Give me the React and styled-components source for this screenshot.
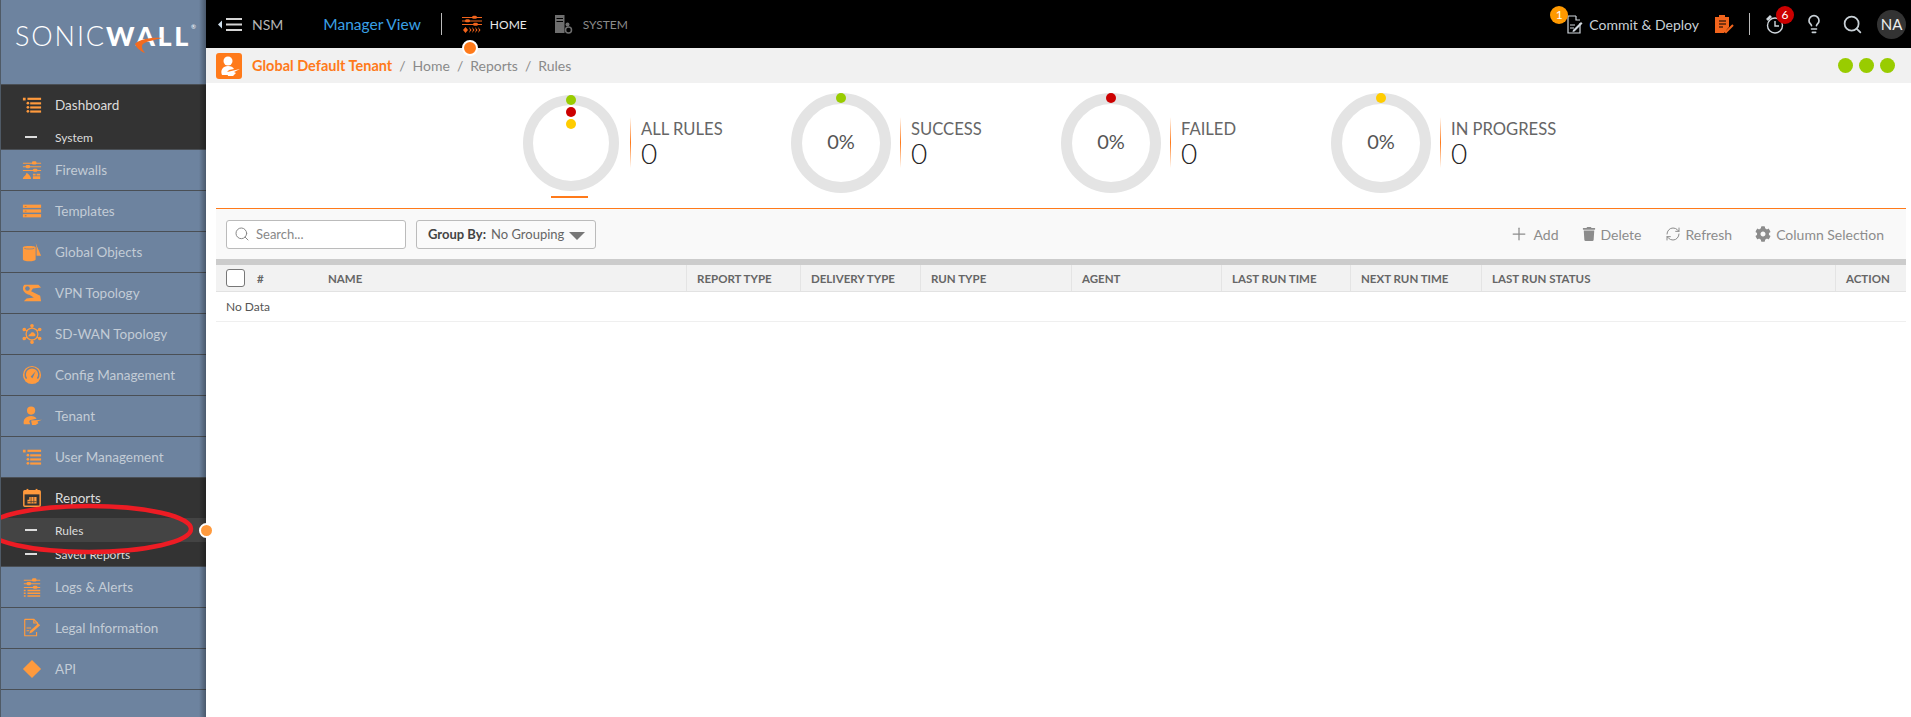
import styled, { createGlobalStyle } from "styled-components";
import { FaCog, FaTrash } from "react-icons/fa";
import { Search, Lightbulb, RefreshCw, Plus } from "lucide-react";

const ORANGE = "#ff9a3d";

const GlobalStyle = createGlobalStyle`
  html, body {
    margin: 0;
    padding: 0;
    background: #fff;
    font-family: "Lato", "Open Sans", sans-serif;
  }
  * {
    box-sizing: border-box;
  }
`;

const Page = styled.div`
  display: grid;
  grid-template-columns: 206px 1fr;
  height: 717px;
  overflow: hidden;
`;

/* sidebar */
const Sidebar = styled.aside`
  position: relative;
  background: #6d839f;
  border-left: 1px solid #4f5a66;
  &::after {
    content: "";
    position: absolute;
    top: 0;
    right: 0;
    bottom: 0;
    width: 7px;
    background: linear-gradient(to right, rgba(0, 0, 0, 0), rgba(0, 0, 0, 0.32));
    pointer-events: none;
  }
`;

const LogoBox = styled.div`
  position: relative;
  height: 85px;
  border-bottom: 1px solid #4a4f55;
  padding: 19px 0 0 14px;
  color: #fff;
  font-size: 27px;
  line-height: 34px;
  white-space: nowrap;
  span {
    font-weight: 300;
    letter-spacing: 1.9px;
  }
  b {
    font-weight: 900;
    letter-spacing: 2.7px;
  }
  sup {
    font-size: 6px;
    line-height: 6px;
    position: absolute;
    top: 24px;
    left: 190px;
  }
  svg {
    position: absolute;
    left: 134px;
    top: 37px;
  }
`;

const NavRow = styled.div`
  display: flex;
  align-items: center;
  height: ${(p) => (p.$header ? "40px" : "41px")};
  border-bottom: ${(p) => (p.$header ? "none" : "1px solid #4a4f55")};
  color: ${(p) => (p.$header ? "#dcdcdc" : "#c3ccd6")};
  font-size: 13.5px;
  svg {
    width: 20px;
    height: 20px;
    margin: 0 13px 0 21px;
    flex: none;
  }
`;

const NavGroup = styled.div`
  background: #333;
  border-bottom: 1px solid #4a4f55;
`;

const SubRow = styled.div`
  position: relative;
  display: flex;
  align-items: center;
  height: 24px;
  font-size: 12px;
  color: #dcdcdc;
  background: ${(p) => (p.$active ? "#444" : "transparent")};
  &::before {
    content: "";
    width: 12px;
    height: 2px;
    background: #ddd;
    margin: 0 18px 0 24px;
  }
`;

const ActiveDot = styled.span`
  position: absolute;
  right: -8px;
  top: 5px;
  width: 15px;
  height: 15px;
  border-radius: 50%;
  background: ${ORANGE};
  border: 2px solid #fff;
  z-index: 3;
`;

const Annotation = styled.svg`
  position: absolute;
  left: 0;
  top: 500px;
  width: 200px;
  height: 60px;
  z-index: 2;
`;

/* top bar */
const Main = styled.div`
  display: flex;
  flex-direction: column;
  min-width: 0;
`;

const TopBar = styled.header`
  position: relative;
  display: flex;
  align-items: center;
  height: 48px;
  background: #000;
  padding: 0 5px 0 12px;
  color: #bdbdbd;
`;

const NsmLabel = styled.span`
  font-size: 14px;
  margin-left: 10px;
  color: #b5b5b5;
`;

const ViewLabel = styled.span`
  font-size: 15.5px;
  margin-left: 40px;
  color: #3aa0e6;
`;

const VLine = styled.span`
  width: 1px;
  height: 22px;
  background: #bbb;
  margin-left: ${(p) => p.$left}px;
`;

const ModuleTab = styled.div`
  position: relative;
  display: flex;
  align-items: center;
  gap: 8px;
  margin-left: ${(p) => p.$left}px;
  font-size: 12px;
  color: ${(p) => (p.$active ? "#e8e8e8" : "#8a8a8a")};
`;

const TabDot = styled.span`
  position: absolute;
  left: 0;
  top: 25px;
  width: 16px;
  height: 16px;
  border-radius: 50%;
  background: #ff7a1a;
  border: 2px solid #fff;
  z-index: 2;
`;

const TopRight = styled.div`
  display: flex;
  align-items: center;
  margin-left: auto;
`;

const CommitBox = styled.div`
  position: relative;
  display: flex;
  align-items: center;
  gap: 6px;
  font-size: 14px;
  color: #c8d0d6;
`;

const CountBadge = styled.span`
  position: absolute;
  left: ${(p) => p.$left}px;
  top: ${(p) => p.$top}px;
  width: 18px;
  height: 18px;
  border-radius: 50%;
  background: ${(p) => p.$color};
  color: #fff;
  font-size: 12px;
  line-height: 18px;
  text-align: center;
`;

const ClockBox = styled.div`
  position: relative;
  display: flex;
`;

const TopIconBox = styled.span`
  display: flex;
  margin-left: ${(p) => p.$left}px;
  color: #c8d0d6;
`;

const Avatar = styled.div`
  width: 29px;
  height: 29px;
  border-radius: 50%;
  background: #333;
  color: #eee;
  font-size: 15px;
  line-height: 29px;
  text-align: center;
  margin-left: 14px;
`;

/* breadcrumb */
const CrumbBar = styled.div`
  display: flex;
  align-items: center;
  height: 35px;
  background: #f1f1f1;
  padding: 0 10px;
  font-size: 14px;
  color: #8a8a8a;
`;

const TenantIcon = styled.div`
  display: flex;
  width: 26px;
  height: 26px;
  background: #ff7a1a;
  border-radius: 3px;
  margin-right: 10px;
`;

const TenantName = styled.b`
  color: #ff7a1a;
  font-weight: 700;
  font-size: 14.5px;
`;

const CrumbSep = styled.span`
  margin: 0 7px;
`;

const Lights = styled.div`
  display: flex;
  gap: 6px;
  margin-left: auto;
  margin-right: 6px;
`;

const Light = styled.span`
  width: 15px;
  height: 15px;
  border-radius: 50%;
  background: #99cc00;
`;

/* stat rings */
const Stats = styled.section`
  display: flex;
  height: 125px;
  padding: 10px 0 0 315px;
`;

const Stat = styled.div`
  display: flex;
  width: 270px;
`;

const RingSlot = styled.div`
  display: flex;
  flex-direction: column;
  align-items: center;
  width: 100px;
  margin-right: 9px;
`;

const Ring = styled.div`
  position: relative;
  display: flex;
  align-items: center;
  justify-content: center;
  width: ${(p) => (p.$small ? 96 : 100)}px;
  height: ${(p) => (p.$small ? 96 : 100)}px;
  margin-top: ${(p) => (p.$small ? 2 : 0)}px;
  padding-bottom: 4px;
  border: ${(p) => (p.$small ? 10 : 11)}px solid #e4e4e4;
  border-radius: 50%;
  font-size: 20px;
  color: #555;
`;

const RingDot = styled.span`
  position: absolute;
  left: 50%;
  top: ${(p) => p.$top}px;
  width: 10px;
  height: 10px;
  margin-left: -5px;
  border-radius: 50%;
  background: ${(p) => p.$color};
`;

const RingMark = styled.span`
  width: 37px;
  height: 2px;
  margin: 5px 3px 0 0;
  background: #ff7a1a;
`;

const StatDivider = styled.span`
  width: 1px;
  height: 51px;
  margin-top: 24px;
  background: linear-gradient(to bottom, rgba(255, 122, 26, 0), #ff7a1a 50%, rgba(255, 122, 26, 0));
`;

const StatText = styled.div`
  margin: 26px 0 0 10px;
  color: #666;
  font-size: 16.6px;
  line-height: 20px;
  strong {
    display: block;
    font-size: 28px;
    line-height: 29px;
    font-weight: 300;
    color: #222;
  }
`;

/* table */
const Content = styled.section`
  margin: 0 5px 0 10px;
  border-top: 1px solid #ff7a1a;
`;

const Toolbar = styled.div`
  display: flex;
  align-items: center;
  height: 50px;
  padding: 0 22px 0 10px;
  background: #f9f9f9;
  border-bottom: 6px solid #ccc;
  box-sizing: content-box;
`;

const SearchBox = styled.div`
  display: flex;
  align-items: center;
  gap: 6px;
  width: 180px;
  height: 29px;
  padding: 0 7px;
  background: #fff;
  border: 1px solid #bbb;
  border-radius: 3px;
  font-size: 13px;
  color: #888;
`;

const GroupBy = styled.div`
  display: flex;
  align-items: center;
  gap: 5px;
  width: 180px;
  height: 29px;
  margin-left: 10px;
  padding: 0 11px;
  background: #fafafa;
  border: 1px solid #bbb;
  border-radius: 3px;
  font-size: 13px;
  color: #666;
  white-space: nowrap;
  b {
    color: #444;
    font-weight: 700;
  }
  i {
    margin-left: auto;
    border-left: 8px solid transparent;
    border-right: 8px solid transparent;
    border-top: 8px solid #777;
    position: relative;
    top: 2px;
  }
`;

const Actions = styled.div`
  display: flex;
  align-items: center;
  gap: 23px;
  margin-left: auto;
`;

const ActionBtn = styled.span`
  display: flex;
  align-items: center;
  gap: 5px;
  font-size: 14px;
  color: #8c8c8c;
`;

const TableRow = styled.div`
  display: grid;
  grid-template-columns: 102px 368px 114px 120px 151px 150px 129px 131px 354px 70px;
  height: 27px;
  background: #f2f2f2;
  border-bottom: 1px solid #e2e2e2;
`;

const HeadCell = styled.div`
  display: flex;
  align-items: center;
  padding: 0 10px;
  font-size: 11.5px;
  font-weight: 700;
  color: #666;
  white-space: nowrap;
  border-left: ${(p) => (p.$line ? "1px solid #e4e4e4" : "none")};
`;

const CheckBox = styled.span`
  width: 19px;
  height: 18px;
  margin: 0 12px 0 0;
  background: #fff;
  border: 1px solid #777;
  border-radius: 3px;
`;

const EmptyRow = styled.div`
  display: flex;
  align-items: center;
  height: 30px;
  padding: 0 10px;
  border-bottom: 1px solid #efefef;
  font-size: 12px;
  color: #555;
`;

const LogoSwoosh = () => (
  <svg width="27" height="16" viewBox="0 0 27 16">
    <path d="M27 1C15 0 3 3 0 7C1 10 5 14 10 16C7 12 6 9 8 7C12 4 20 3 27 1Z" fill="#f26b21" />
  </svg>
);

const IconList = () => (
  <svg viewBox="0 0 22 22" fill={ORANGE}>
    <rect x="1" y="3" width="3" height="3" />
    <rect x="6" y="3" width="15" height="2.4" />
    <circle cx="6.5" cy="9" r="1.5" />
    <rect x="9" y="8" width="12" height="2.4" />
    <circle cx="6.5" cy="13.5" r="1.5" />
    <rect x="9" y="12.5" width="12" height="2.4" />
    <circle cx="6.5" cy="18" r="1.5" />
    <rect x="9" y="17" width="12" height="2.4" />
  </svg>
);

const IconFirewall = () => (
  <svg viewBox="0 0 22 22" fill={ORANGE} stroke="none">
    <path d="M1 3h20v1H1zM1 7h20v1H1zM1 11h20v1H1z" />
    <rect x="11" y="1.5" width="5" height="3.5" rx="1.5" />
    <rect x="4" y="5.5" width="5" height="3.5" rx="1.5" />
    <rect x="12" y="9.5" width="5" height="3.5" rx="1.5" />
    <path d="M1 21c0-3 3-3 4-7 2 1 5 4 5 7zM12 15h3v2h-3zM16 15h4v2h-4zM12 18h8v3h-8z" />
  </svg>
);

const IconTemplates = () => (
  <svg viewBox="0 0 22 22" fill={ORANGE}>
    <rect x="1" y="4" width="20" height="3.6" />
    <rect x="1" y="9.2" width="20" height="3.6" />
    <rect x="1" y="14.4" width="20" height="3.6" />
    <path d="M3 5.4h2v1H3zM3 10.6h2v1H3zM3 15.8h2v1H3z" fill="#b5763a" />
  </svg>
);

const IconObjects = () => (
  <svg viewBox="0 0 22 22" fill={ORANGE}>
    <path d="M15 1l6 14h-5V6z" />
    <path d="M1 6c0-2 14-2 14 0v13c0 3-14 3-14 0z" />
    <path d="M2.5 7c2 1 9 1 11 0" stroke="#6d839f" strokeWidth="0.8" fill="none" />
  </svg>
);

const IconVpn = () => (
  <svg viewBox="0 0 22 22" fill={ORANGE}>
    <path d="M3 2h15l3 3-9 1-2 3 10 5 1 6H2l3-3 8-1-5-3C4 12 1 9 1 6c0-2 1-4 2-4z" />
    <circle cx="6" cy="6" r="2.5" fill="#6d839f" />
  </svg>
);

const IconHub = () => (
  <svg viewBox="0 0 22 22" fill="none" stroke={ORANGE} strokeWidth="1.4">
    <circle cx="11" cy="11" r="6.5" />
    <path d="M11 1v3M11 18v3M2 5.5l3.5 2M20 5.5l-3.5 2M2 16.5l3.5-2M20 16.5l-3.5-2" />
    <circle cx="11" cy="2" r="1.3" fill={ORANGE} />
    <circle cx="11" cy="20" r="1.3" fill={ORANGE} />
    <circle cx="2.5" cy="6" r="1.3" fill={ORANGE} />
    <circle cx="19.5" cy="6" r="1.3" fill={ORANGE} />
    <circle cx="2.5" cy="16" r="1.3" fill={ORANGE} />
    <circle cx="19.5" cy="16" r="1.3" fill={ORANGE} />
    <path d="M7 13.5c0-2 2-2 2.500-3 .5-2 3.500-2 4 0 1.500 0 2 3 0 3z" fill={ORANGE} stroke="none" />
  </svg>
);

const IconGauge = () => (
  <svg viewBox="0 0 22 22">
    <circle cx="11" cy="11" r="10" fill={ORANGE} />
    <path d="M5 15a7.5 7.5 0 1 1 12 0" fill="none" stroke="#6d839f" strokeWidth="1.6" />
    <path d="M9.5 13L15 7l-3.5 7.5z" fill="#6d839f" />
  </svg>
);

const IconTenant = () => (
  <svg viewBox="0 0 22 22" fill={ORANGE}>
    <circle cx="10" cy="5" r="4.5" />
    <path d="M2 20c-1-5 2-9 8-9 3 0 5 1 6 3l-5 1c-2 0-3 1-3 2l1 3zM10 16l12-1-5 2 1 2-3 2h-4z" />
  </svg>
);

const IconCalendar = () => (
  <svg viewBox="0 0 22 22">
    <rect x="2" y="3" width="18" height="17" rx="1" fill="none" stroke={ORANGE} strokeWidth="1.6" />
    <rect x="2" y="3" width="18" height="4" fill={ORANGE} />
    <rect x="5" y="1" width="2" height="4" fill={ORANGE} />
    <rect x="15" y="1" width="2" height="4" fill={ORANGE} />
    <path d="M8 10h8v7H6v-4h2z" fill={ORANGE} />
    <path d="M6 15h10M10 10v7M13 10v7" stroke="#333" strokeWidth="0.7" />
  </svg>
);

const IconLogs = () => (
  <svg viewBox="0 0 22 22" fill={ORANGE}>
    <path d="M2 3h18v1H2zM2 7h18v1H2zM2 11h18v1H2z" />
    <rect x="11" y="1.5" width="5" height="3.5" rx="1.5" />
    <rect x="5" y="5.5" width="5" height="3.5" rx="1.5" />
    <rect x="12" y="9.5" width="5" height="3.5" rx="1.5" />
    <path d="M2 14h2v1.6H2zM6 14h14v1.6H6zM2 17h2v1.6H2zM6 17h14v1.6H6zM2 20h2v1.6H2zM6 20h14v1.6H6z" />
  </svg>
);

const IconLegal = () => (
  <svg viewBox="0 0 22 22" fill="none" stroke={ORANGE} strokeWidth="1.3">
    <path d="M3 1.5h10l4 4v3M3 1.5v18h13v-4" />
    <path d="M13 1.5v4h4" />
    <path d="M9 14l9-8 2 2-9 8-3 1z" fill={ORANGE} stroke="none" />
    <path d="M5 11h5M5 14h3" />
  </svg>
);

const IconDiamond = () => (
  <svg viewBox="0 0 22 22" fill={ORANGE}>
    <path d="M11 1l10 10-10 10L1 11z" />
  </svg>
);

const IconMenuBack = () => (
  <svg width="24" height="13" viewBox="0 0 24 13" fill="#d5d5d5">
    <path d="M0 6.5l4-4v8z" fill="#cfe0ee" />
    <rect x="8" y="0" width="16" height="2" />
    <rect x="8" y="5.5" width="16" height="2" />
    <rect x="8" y="11" width="16" height="2" />
  </svg>
);

const IconHome = () => (
  <svg width="20" height="19" viewBox="0 0 20 19" fill="#f2641c">
    <path d="M0 2h20v1H0zM0 5.5h20v1H0zM0 9h20v1H0z" />
    <rect x="10" y="0.8" width="5" height="3" rx="1.5" />
    <rect x="3" y="4.3" width="5" height="3" rx="1.5" />
    <rect x="11" y="7.8" width="5" height="3" rx="1.5" />
    <path d="M1 15l2.5-3 2.5 3-2.5 3zM7 12l2.5 3L7 18l1-3zM10 12l2.5 3-2.5 3 1-3zM13 12l2.5 3-2.5 3 1-3zM16 12l2.5 3-2.5 3 1-3z" />
  </svg>
);

const IconServer = () => (
  <svg width="20" height="19" viewBox="0 0 20 19" fill="#6e6e6e">
    <path d="M0 0h9.5v18H0z" />
    <path d="M1.5 3h6.5v1H1.5zM1.5 6h6.5v1H1.5z" fill="#000" />
    <circle cx="13.5" cy="15" r="3" fill="none" stroke="#6e6e6e" strokeWidth="1.5" />
    <circle cx="12.5" cy="9.5" r="2" />
  </svg>
);

const IconCommit = () => (
  <svg width="17" height="19" viewBox="0 0 17 19" fill="none" stroke="#cfd6dc" strokeWidth="1.2">
    <path d="M10 1H2v17h12V8" />
    <path d="M10 1v4h4" />
    <path d="M4 10h5M4 13h4" />
    <path d="M7 15l8-8 1.5 1.5-8 8-2 .5z" fill="#cfd6dc" stroke="none" />
  </svg>
);

const IconClipboard = () => (
  <svg width="20" height="21" viewBox="0 0 20 21">
    <path d="M1 3h4V1h6v2h4v10l-5 6H1z" fill="#f2641c" />
    <path d="M5 7h7M5 10h7M5 13h4" stroke="#000" strokeWidth="1.2" />
    <path d="M9 15l3 3 7-7" fill="none" stroke="#f2641c" strokeWidth="2" />
  </svg>
);

const IconClock = () => (
  <svg width="18" height="19" viewBox="0 0 18 19" fill="none" stroke="#cfd6dc" strokeWidth="1.4">
    <circle cx="9" cy="10.5" r="7.5" />
    <path d="M9 6v5h4" />
    <path d="M1 4l3-3 1 1-3 3z" fill="#cfd6dc" />
  </svg>
);

const IconTenantWhite = () => (
  <svg width="26" height="26" viewBox="0 0 26 26" fill="#fff">
    <circle cx="12" cy="8" r="4.5" />
    <path d="M6 22c-2-5 1-9 6-9 3 0 5 1 6 3l-5 1-2 2 1 3zM11 19l13-3-6 3 2 1-3 3h-5z" />
  </svg>
);

const NavItem = ({ icon: Icon, label, header }) => (
  <NavRow $header={header}>
    <Icon />
    {label}
  </NavRow>
);

const columns = ["REPORT TYPE", "DELIVERY TYPE", "RUN TYPE", "AGENT", "LAST RUN TIME", "NEXT RUN TIME", "LAST RUN STATUS", "ACTION"];

const stats = [
  { label: "SUCCESS", color: "#99cc00" },
  { label: "FAILED", color: "#cc0000" },
  { label: "IN PROGRESS", color: "#ffcc00" },
];

export default function App() {
  return (
    <Page>
      <GlobalStyle />
      <Sidebar>
        <LogoBox>
          <span>SONIC</span>
          <b>WALL</b>
          <sup>®</sup>
          <LogoSwoosh />
        </LogoBox>
        <NavGroup>
          <NavItem header icon={IconList} label="Dashboard" />
          <SubRow>System</SubRow>
        </NavGroup>
        <NavItem icon={IconFirewall} label="Firewalls" />
        <NavItem icon={IconTemplates} label="Templates" />
        <NavItem icon={IconObjects} label="Global Objects" />
        <NavItem icon={IconVpn} label="VPN Topology" />
        <NavItem icon={IconHub} label="SD-WAN Topology" />
        <NavItem icon={IconGauge} label="Config Management" />
        <NavItem icon={IconTenant} label="Tenant" />
        <NavItem icon={IconList} label="User Management" />
        <NavGroup>
          <NavItem header icon={IconCalendar} label="Reports" />
          <SubRow $active>
            Rules
            <ActiveDot />
          </SubRow>
          <SubRow>Saved Reports</SubRow>
        </NavGroup>
        <NavItem icon={IconLogs} label="Logs & Alerts" />
        <NavItem icon={IconLegal} label="Legal Information" />
        <NavItem icon={IconDiamond} label="API" />
        <Annotation viewBox="0 0 200 60">
          <ellipse cx="88" cy="29" rx="102" ry="23" fill="none" stroke="#ed1c24" strokeWidth="4.5" />
        </Annotation>
      </Sidebar>
      <Main>
        <TopBar>
          <IconMenuBack />
          <NsmLabel>NSM</NsmLabel>
          <ViewLabel>Manager View</ViewLabel>
          <VLine $left={20} />
          <ModuleTab $left={20} $active>
            <IconHome />
            HOME
            <TabDot />
          </ModuleTab>
          <ModuleTab $left={28}>
            <IconServer />
            SYSTEM
          </ModuleTab>
          <TopRight>
            <CommitBox>
              <IconCommit />
              Commit &amp; Deploy
              <CountBadge $left={-16} $top={-9} $color="#ff9900">
                1
              </CountBadge>
            </CommitBox>
            <TopIconBox $left={15}>
              <IconClipboard />
            </TopIconBox>
            <VLine $left={15} />
            <TopIconBox $left={16}>
              <ClockBox>
                <IconClock />
                <CountBadge $left={10} $top={-9} $color="#cc0000">
                  6
                </CountBadge>
              </ClockBox>
            </TopIconBox>
            <TopIconBox $left={20}>
              <Lightbulb size={20} strokeWidth={2} />
            </TopIconBox>
            <TopIconBox $left={18}>
              <Search size={21} strokeWidth={2} />
            </TopIconBox>
            <Avatar>NA</Avatar>
          </TopRight>
        </TopBar>
        <CrumbBar>
          <TenantIcon>
            <IconTenantWhite />
          </TenantIcon>
          <TenantName>Global Default Tenant</TenantName>
          <CrumbSep>/</CrumbSep>
          Home
          <CrumbSep>/</CrumbSep>
          Reports
          <CrumbSep>/</CrumbSep>
          Rules
          <Lights>
            <Light />
            <Light />
            <Light />
          </Lights>
        </CrumbBar>
        <Stats>
          <Stat>
            <RingSlot>
              <Ring $small>
                <RingDot $top={-10} $color="#99cc00" />
                <RingDot $top={2} $color="#cc0000" />
                <RingDot $top={14} $color="#ffcc00" />
              </Ring>
              <RingMark />
            </RingSlot>
            <StatDivider />
            <StatText>
              ALL RULES
              <strong>0</strong>
            </StatText>
          </Stat>
          {stats.map((s) => (
            <Stat key={s.label}>
              <RingSlot>
                <Ring>
                  <RingDot $top={-11} $color={s.color} />
                  0%
                </Ring>
              </RingSlot>
              <StatDivider />
              <StatText>
                {s.label}
                <strong>0</strong>
              </StatText>
            </Stat>
          ))}
        </Stats>
        <Content>
          <Toolbar>
            <SearchBox>
              <Search size={16} strokeWidth={1.5} />
              Search...
            </SearchBox>
            <GroupBy>
              <b>Group By:</b> No Grouping
              <i />
            </GroupBy>
            <Actions>
              <ActionBtn>
                <Plus size={20} strokeWidth={1.5} />
                Add
              </ActionBtn>
              <ActionBtn>
                <FaTrash size={14} />
                Delete
              </ActionBtn>
              <ActionBtn>
                <RefreshCw size={16} strokeWidth={1.5} />
                Refresh
              </ActionBtn>
              <ActionBtn>
                <FaCog size={16} />
                Column Selection
              </ActionBtn>
            </Actions>
          </Toolbar>
          <TableRow>
            <HeadCell>
              <CheckBox />#
            </HeadCell>
            <HeadCell>NAME</HeadCell>
            {columns.map((c) => (
              <HeadCell $line key={c}>
                {c}
              </HeadCell>
            ))}
          </TableRow>
          <EmptyRow>No Data</EmptyRow>
        </Content>
      </Main>
    </Page>
  );
}
